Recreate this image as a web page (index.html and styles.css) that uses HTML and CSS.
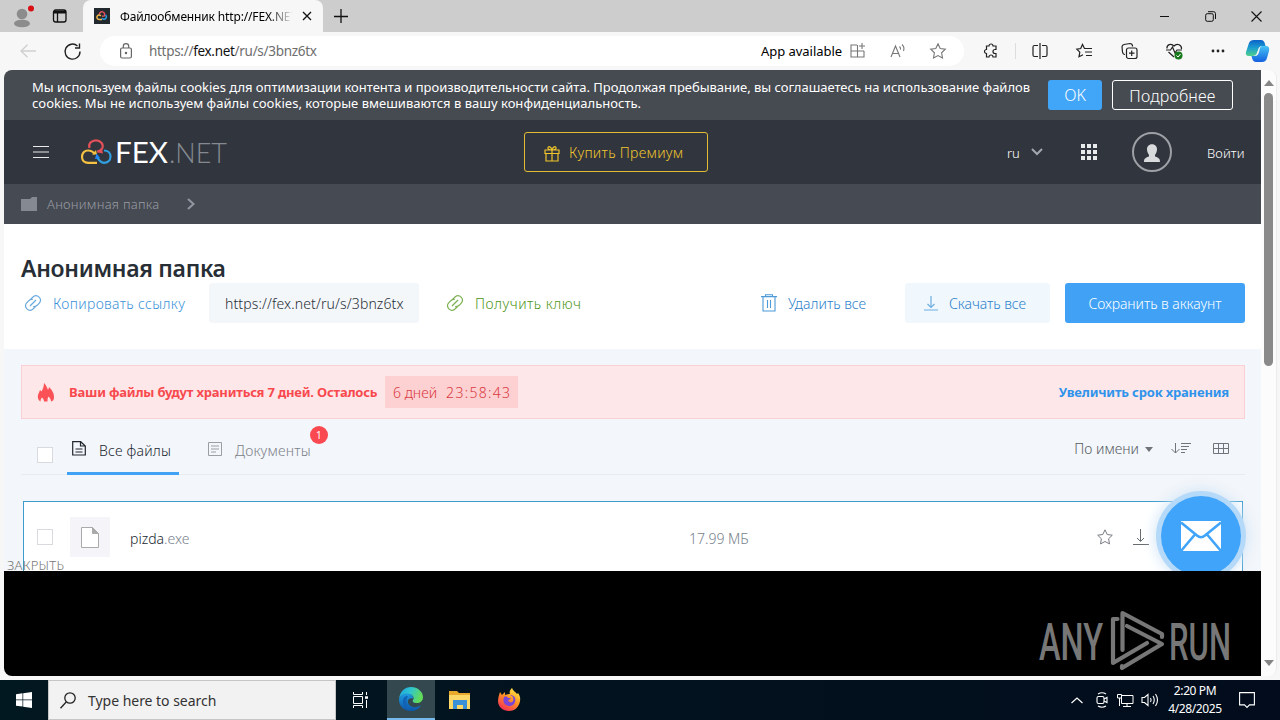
FILE: index.html
```
<!DOCTYPE html>
<html lang="ru">
<head>
    <meta charset="UTF-8">
    <title>Файлообменник http://FEX.NET</title>
    <link rel="stylesheet" href="styles.css">
</head>
<body>

<!-- browser tabs -->
<div class="tabstrip">
    <svg class="profile" width="24" height="28" viewBox="0 0 24 28">
        <circle cx="12" cy="12" r="5.3" fill="#8c8c8c"/>
        <ellipse cx="12" cy="21.5" rx="8" ry="3.8" fill="#8c8c8c"/>
        <circle cx="21" cy="6.5" r="3" fill="#d80f14"/>
    </svg>
    <svg class="tab-actions" width="16" height="16" viewBox="0 0 16 16" fill="none" stroke="#111" stroke-width="1.3">
        <rect x="1.5" y="2" width="12.5" height="12" rx="2.2"/>
        <path d="M2 3.5h12M2 4.8h12M5.5 5v9"/>
    </svg>
    <div class="tab">
        <svg width="16" height="16" viewBox="0 0 16 16" fill="none" stroke-width="1.5">
            <path d="M0 0h16v16H0z" fill="#22292f"/>
            <path d="M5.3 6.5a2.7 2.7 0 1 1 5 1.4L8 8.3" stroke="#e0525c"/>
            <path d="M8 11.5H5a2.2 2.2 0 1 1 1.8-3.6" stroke="#f0b94a"/>
            <path d="M11.5 7a2.4 2.4 0 1 1-3.5 3.2" stroke="#2b9fe0"/>
        </svg>
        <span class="tab-title">Файлообменник http://FEX.NET</span>
        <svg width="10" height="10" viewBox="0 0 10 10" stroke="#111" stroke-width="1.3"><path d="M1 1l8 8M9 1l-8 8"/></svg>
    </div>
    <svg class="new-tab" width="14" height="14" viewBox="0 0 14 14" stroke="#111" stroke-width="1.3"><path d="M7 0v14M0 7.5h14"/></svg>
    <div class="window-buttons">
        <svg width="11" height="11" viewBox="0 0 11 11" stroke="#111"><path d="M1 5.5h9"/></svg>
        <svg width="11" height="11" viewBox="0 0 11 11" fill="none" stroke="#111"><rect x=".7" y="2.7" width="7.6" height="7.6" rx="1.5"/><path d="M3 .7h5.5a2 2 0 0 1 2 2V8"/></svg>
        <svg width="11" height="11" viewBox="0 0 11 11" stroke="#111" stroke-width="1.1"><path d="M.5.5l10 10M10.5.5l-10 10"/></svg>
    </div>
</div>

<!-- address bar -->
<div class="toolbar">
    <svg class="back" width="16" height="14" viewBox="0 0 16 14" fill="none" stroke="#cfcfcf" stroke-width="1.3"><path d="M16 7H1M7.5.7L1 7l6.5 6.3"/></svg>
    <svg class="reload" width="17" height="17" viewBox="0 0 17 17" fill="none" stroke="#222" stroke-width="1.4"><path d="M16 8.5A7.5 7.5 0 1 1 13.5 3M15.5.5V5H11"/></svg>
    <div class="address">
        <svg width="12" height="16" viewBox="0 0 12 16" fill="none" stroke="#666" stroke-width="1.2"><rect x=".6" y="5" width="10.8" height="10" rx="1.5"/><path d="M3.3 5V3.3a2.7 2.7 0 0 1 5.4 0V5"/><circle cx="6" cy="10" r=".6" fill="#666"/></svg>
        <span class="url">https://<b>fex.net</b>/ru/s/3bnz6tx</span>
        <span class="app-available">App available</span>
        <svg width="16" height="16" viewBox="0 0 16 16" fill="none" stroke="#777" stroke-width="1.1"><path d="M7 2H1v12h13V8M7.5 2v12M1 8h13M12 0v6M9 3h6"/></svg>
        <svg class="read" width="16" height="16" viewBox="0 0 16 16" fill="none" stroke="#777" stroke-width="1.1"><path d="M1 14L5.5 3 10 14M2.5 10.500h6M9.500 3.500c1 1 1.300 2 1 3.200M12 1.500c2 2 2.300 4.500 1.500 6.500"/></svg>
        <svg class="fav" width="16" height="16" viewBox="0 0 16 16" fill="none" stroke="#777" stroke-width="1.1"><path d="M8 .8l2.200 4.700 5.100.7-3.700 3.600.9 5.100L8 12.500l-4.500 2.400.9-5.100L.7 6.200l5.100-.7z"/></svg>
    </div>
    <div class="tools">
        <svg width="16" height="16" viewBox="0 0 16 16" fill="none" stroke="#222" stroke-width="1.2"><path d="M3.500 3H6a2 2 0 0 1 4 0h3v3.500h-1a2 2 0 0 0 0 4h1V14h-3a2 2 0 0 0-4 0H3.500v-3.500a2 2 0 1 1 0-4z"/></svg>
        <i class="divider"></i>
        <svg width="16" height="16" viewBox="0 0 16 16" fill="none" stroke="#222" stroke-width="1.2"><path d="M6 2.500H2.500Q1 2.500 1 4v8q0 1.500 1.500 1.500H6M10 2.500h3.500Q15 2.500 15 4v8q0 1.500-1.500 1.500H10M8 0v16"/></svg>
        <svg width="17" height="16" viewBox="0 0 17 16" fill="none" stroke="#222" stroke-width="1.2"><path d="M10 5.500H8.500L6.500 1.500 4.700 5.500.8 6.200l3 3-.8 4.500 4-2M9.500 5.500H16M9 9h7M10 12.500h6"/></svg>
        <svg width="17" height="16" viewBox="0 0 17 16" fill="none" stroke="#222" stroke-width="1.2"><path d="M4 11.500Q2 11.500 1.500 9L1 4Q1 2 3 1.500l6-1q2 0 2.500 2v1"/><rect x="5.500" y="5" width="10.500" height="10.500" rx="2"/><path d="M10.700 7.500V13M8 10.200h5.500"/></svg>
        <svg width="17" height="17" viewBox="0 0 17 17" fill="none" stroke="#222" stroke-width="1.2"><path d="M8 14L2.500 9M1 5.500C.5 2 5-.5 8 3c3-3.500 8-1 7.500 3M0 7h4.500l2-3L9 10l2-3h5"/><circle cx="12.500" cy="12.500" r="4" fill="#187a1c" stroke="none"/><path d="M10.500 12.500l1.500 1.500 2.500-3" stroke="#fff" stroke-width="1"/></svg>
        <svg width="14" height="4" viewBox="0 0 14 4" fill="#222"><circle cx="2" cy="2" r="1.400"/><circle cx="7" cy="2" r="1.400"/><circle cx="12" cy="2" r="1.400"/></svg>
    </div>
    <svg class="copilot" width="24" height="24" viewBox="0 0 24 24">
        <defs>
            <linearGradient id="cpA" x1="0" y1="0" x2="0" y2="1"><stop offset="0" stop-color="#0b62c9"/><stop offset=".5" stop-color="#1d9fd0"/><stop offset="1" stop-color="#4fd18c"/></linearGradient>
            <linearGradient id="cpB" x1="0" y1="0" x2="0" y2="1"><stop offset="0" stop-color="#45c3f5"/><stop offset="1" stop-color="#1461e0"/></linearGradient>
        </defs>
        <path d="M8 1h7q3 0 4 4l.5 2H16q-3 0-4 4l-1.500 4q-1 2-4 2H3q-4 0-3-4L3 4q1-3 5-3z" fill="url(#cpA)"/>
        <path d="M16 7h4q4 0 3 5l-2 7q-1 4-5 4h-6q-3 0-4-4l-.500-2H9q3 0 4-4l1-4q.5-2 2-2z" fill="url(#cpB)"/>
    </svg>
</div>

<div class="window">
    <div class="page">
        <div class="cookies">
            <p>Мы используем файлы cookies для оптимизации контента и производительности сайта. Продолжая пребывание, вы соглашаетесь на использование файлов<br><span>cookies. Мы не используем файлы cookies, которые вмешиваются в вашу конфиденциальность.</span></p>
            <button class="btn-ok">OK</button>
            <button class="btn-more">Подробнее</button>
        </div>

        <div class="header">
            <svg class="burger" width="16" height="12" viewBox="0 0 16 12" stroke="#e8e9ea"><path d="M0 .5h16M0 6h16M0 11.500h16"/></svg>
            <svg class="logo" width="150" height="32" viewBox="0 0 150 32">
                <g fill="none" stroke-width="2.200">
                    <path d="M9.500 12C8 7.500 11.500 4.300 16 4.300s8 4 6.200 8c-1 2-3 3-5 3.300" stroke="#e2505a"/>
                    <path d="M17 26.800H8C4.500 26.800 2 24.300 2 20.800s2.500-6.300 6-6.300 5 1 6.800 3.500" stroke="#f5c243"/>
                    <path d="M24 14.500c4 0 6.500 2.800 6.500 6.100 0 4-3 6.200-6.500 6.200-3 0-5-2-7-6" stroke="#2fa0e2"/>
                </g>
                <path d="M12 18.500l5 0-1-4.500z" fill="#f5c243"/><path d="M15 23l1.500-5.500 3.500 4.500z" fill="#1e88ff"/><path d="M23 17.500l-5-1 4-3.500z" fill="#e2505a"/>
                <text x="35" y="26.500" textLength="53" lengthAdjust="spacingAndGlyphs" class="logo-main">FEX</text>
                <text x="89" y="26.500" textLength="58" lengthAdjust="spacingAndGlyphs" class="logo-net">.NET</text>
            </svg>
            <button class="premium">
                <svg width="16" height="16" viewBox="0 0 16 16" fill="none" stroke="#f0c52e" stroke-width="1.200"><path d="M1 4h14v3.500H1zM2 7.500h12V15H2zM8 4v11M8 4C5 4 3.500 3 4 1.500S7 .5 8 4c1-3.500 3.500-4 4-2.500S11 4 8 4z"/></svg>
                <span>Купить Премиум</span>
            </button>
            <span class="lang">ru</span>
            <svg class="lang-arrow" width="12" height="8" viewBox="0 0 12 8" fill="none" stroke="#a3a7ad" stroke-width="2"><path d="M1 1l5 5 5-5"/></svg>
            <svg class="apps" width="16" height="16" viewBox="0 0 16 16" fill="#e9eaeb"><path d="M0 0h4v4H0zM6 0h4v4H6zM12 0h4v4h-4zM0 6h4v4H0zM6 6h4v4H6zM12 6h4v4h-4zM0 12h4v4H0zM6 12h4v4H6zM12 12h4v4h-4z"/></svg>
            <svg class="avatar" width="40" height="40" viewBox="0 0 40 40"><circle cx="20" cy="20" r="19" fill="none" stroke="#9da0a5" stroke-width="2"/><path d="M15 17c0-6.500 10-6.500 10 0 0 3-1 4-2 6v1.500c3 1 5 1.500 5 5.500H12c0-4 2-4.500 5-5.500V23c-1-2-2-3-2-6z" fill="#d9dadc"/></svg>
            <span class="login">Войти</span>
        </div>

        <div class="crumbs">
            <svg width="16" height="14" viewBox="0 0 16 14" fill="#858a92"><path d="M0 2h9l2-2h5v14H0z"/></svg>
            <span>Анонимная папка</span>
            <svg width="8" height="12" viewBox="0 0 8 12" fill="none" stroke="#9296a0" stroke-width="2"><path d="M1 1l5.500 5L1 11"/></svg>
        </div>

        <div class="folder">
            <h1><span>Анонимная папка</span></h1>
            <div class="actions">
                <svg class="link-icon" width="18" height="18" viewBox="0 0 18 18" fill="none" stroke="#6aa9dc" stroke-width="1.200"><path d="M6.500 5.500l3-3a4.500 4.500 0 0 1 6.200 6.200l-2.500 2.600a4.500 4.500 0 0 1-4 1.200M11.500 12.500l-3 3a4.500 4.500 0 0 1-6.200-6.200l2.500-2.600a4.500 4.500 0 0 1 4-1.200M6 12l6-6"/></svg>
                <a class="copy">Копировать ссылку</a>
                <div class="share-url">https://fex.net/ru/s/3bnz6tx</div>
                <svg class="link-icon" width="18" height="18" viewBox="0 0 18 18" fill="none" stroke="#7bb050" stroke-width="1.200"><path d="M6.500 5.500l3-3a4.500 4.500 0 0 1 6.200 6.200l-2.500 2.600a4.500 4.500 0 0 1-4 1.200M11.500 12.500l-3 3a4.500 4.500 0 0 1-6.200-6.200l2.500-2.600a4.500 4.500 0 0 1 4-1.200M6 12l6-6"/></svg>
                <a class="key">Получить ключ</a>
                <svg class="trash" width="16" height="18" viewBox="0 0 16 18" fill="none" stroke="#4d9ad8" stroke-width="1.100"><path d="M0 2.600h16M4.500 2.500V.7h7v1.800M2 3v14h12V3M6.500 6v8M9.500 6v8"/></svg>
                <a class="delete">Удалить все</a>
                <button class="download-all">
                    <svg width="14" height="15" viewBox="0 0 14 15" fill="none" stroke="#6eaee0" stroke-width="1.200"><path d="M7 0v11M3.500 8L7 11.500 10.500 8M0 14h14"/></svg>
                    <span>Скачать все</span>
                </button>
                <button class="save"><span>Сохранить в аккаунт</span></button>
            </div>
        </div>

        <div class="content">
            <div class="alert">
                <svg width="18" height="19" viewBox="0 0 18 19" fill="#fb5257"><path d="M7 0c2 2 3 4 4 7 .5-1 1-2 1-3 4 4 5 7 5 10s-1 4-3 4.500c0-2-1-3.500-2.500-5-1 1.500-1 3-1 5H7c0-2-1-3-2-4-1 1-1.500 2-1.500 4C1 17 .5 15 1 12c.5-2 1.500-3 2-5 .5.500 1 1 1.500 1.500C6 6 7 3 7 0z"/></svg>
                <b class="alert-text">Ваши файлы будут храниться 7 дней. Осталось</b>
                <div class="timer"><span>6 дней</span><span class="clock">23:58:43</span></div>
                <a class="extend">Увеличить срок хранения</a>
            </div>

            <div class="filters">
                <i class="checkbox"></i>
                <div class="filter active">
                    <svg width="14" height="15" viewBox="0 0 14 15" fill="none" stroke="#20272e" stroke-width="1.200"><path d="M.7.7h8L13.300 5v9H.7zM8.500.7V5h4.800M3.500 8h7M3.500 11h7"/></svg>
                    <span>Все файлы</span>
                </div>
                <div class="filter docs">
                    <svg width="14" height="14" viewBox="0 0 14 14" fill="none" stroke="#9a9fa5"><path d="M.5.5h13v13H.5zM3 4h8M3 7h8M3 10h5"/></svg>
                    <span>Документы</span>
                    <em class="badge">1</em>
                </div>
                <div class="sorting">
                    <span>По имени</span>
                    <svg class="caret" width="8" height="5" viewBox="0 0 8 5" fill="#70757c"><path d="M0 0h8L4 5z"/></svg>
                    <svg class="sort" width="20" height="11" viewBox="0 0 20 11" fill="none" stroke="#70757c"><path d="M4.500 0v10M.5 6l4 4 4-4M10 .5h10M10 3.500h8M10 6.500h6M10 9.500h4"/></svg>
                    <svg class="grid-view" width="16" height="11" viewBox="0 0 16 11" fill="none" stroke="#70757c"><path d="M.5.5h15v10H.5zM.5 5.500h15M5.500.5v10M10.500.5v10"/></svg>
                </div>
            </div>

            <div class="file-row">
                <i class="checkbox"></i>
                <div class="thumb">
                    <svg width="18" height="21" viewBox="0 0 18 21" fill="#fff" stroke="#aaa"><path d="M.5.5h11l6 6v14H.5z"/><path d="M11.500.5v6h6z" fill="#aaa"/></svg>
                </div>
                <div class="file-name">pizda<span>.exe</span></div>
                <div class="file-size">17.99 МБ</div>
                <svg class="star" width="16" height="16" viewBox="0 0 16 16" fill="none" stroke="#777c82"><path d="M8 .8l2.200 4.700 5.100.7-3.700 3.600.9 5.100L8 12.500l-4.500 2.400.9-5.100L.7 6.200l5.100-.7z"/></svg>
                <svg class="download" width="16" height="16" viewBox="0 0 16 16" fill="none" stroke="#666b71"><path d="M7.500 0v12M4 9l3.500 3.500L11 9M0 15.500h16"/></svg>
            </div>
            <span class="close-label">ЗАКРЫТЬ</span>
            <div class="chat">
                <svg width="40" height="30" viewBox="0 0 40 30"><path d="M0 0h40v30H0z" fill="#fff"/><path d="M0 1.500l16 13q4 3.500 8 0l16-13M0 30l13.500-16M40 30L26.500 14" fill="none" stroke="#3fa4fa" stroke-width="2.600"/></svg>
            </div>
        </div>

        <div class="ad">
            <svg class="anyrun" width="194" height="64" viewBox="0 0 194 64">
                <text x="1" y="51" textLength="64" lengthAdjust="spacingAndGlyphs">ANY</text>
                <g fill="none" stroke="#777" stroke-width="4.200" stroke-linejoin="round" stroke-linecap="round">
                    <path d="M84.500 41V4L124 25v3M89 17l35 18-40 24v-2"/>
                    <path d="M79.500 10h-4.500v44l34-20"/>
                </g>
                <text x="131" y="51" textLength="62" lengthAdjust="spacingAndGlyphs">RUN</text>
            </svg>
        </div>
    </div>
    <div class="scrollbar">
        <svg width="10" height="6" viewBox="0 0 10 6" fill="#858585"><path d="M5 0l5 6H0z"/></svg>
        <div class="scroll-thumb"></div>
        <svg class="down" width="10" height="6" viewBox="0 0 10 6" fill="#858585"><path d="M0 0h10L5 6z"/></svg>
    </div>
</div>

<div class="taskbar">
    <div class="start"><svg width="16" height="16" viewBox="0 0 16 16" fill="#fff"><path d="M0 2.200L6.500 1.300v6.200H0zM7.200 1.200L16 0v7.500H7.200zM0 8.300h6.500v6.300L0 13.700zM7.200 8.300H16V16l-8.800-1.200z"/></svg></div>
    <div class="search">
        <svg width="16" height="17" viewBox="0 0 16 17" fill="none" stroke="#222" stroke-width="1.300"><circle cx="10" cy="6" r="5.200"/><path d="M6.200 10L.5 16.300"/></svg>
        <span>Type here to search</span>
    </div>
    <div class="task"><svg width="16" height="16" viewBox="0 0 16 16" fill="none" stroke="#fff"><path d="M.5 0v2.500h9V0M.5 16v-2.500h9V16M.5 4.500h9v7h-9zM13.500 0v3M13.500 8v8"/><path d="M12 4.300h3v2.500h-3z" fill="#fff" stroke="none"/></svg></div>
    <div class="task current">
        <svg width="24" height="24" viewBox="0 0 24 24">
            <defs>
                <linearGradient id="edA" x1="0" y1="0" x2="1" y2=".3"><stop offset="0" stop-color="#1b9fe0"/><stop offset=".5" stop-color="#2fc5cf"/><stop offset="1" stop-color="#63db5a"/></linearGradient>
                <linearGradient id="edB" x1="0" y1="0" x2="0" y2="1"><stop offset="0" stop-color="#1f9be0"/><stop offset="1" stop-color="#0c56a8"/></linearGradient>
            </defs>
            <path d="M0 12C1 4 6 0 12 0c7 0 12 5 12 10 0 4-3 6-6 6-4 0-5-1.500-4-3 2-3-1-6-5-6-5 0-8 2-9 5z" fill="url(#edA)"/>
            <path d="M0 12c1-3 4-5.500 8-5.500 4 0 6.500 2.500 6 5-5-1-6 3-4.500 5.500C12 21 18 21 22 18c-2 4-6 6-10 6C5 24-.5 19 0 12z" fill="url(#edB)"/>
            <path d="M9 9c-3 4-2 11 4 14.500-6-.5-9-4-9-8.500S6 9 9 9z" fill="#1263b5"/>
        </svg>
    </div>
    <div class="task"><svg width="22" height="20" viewBox="0 0 22 20"><path d="M0 1h8l2 2h11v15H0z" fill="#e8a92c"/><path d="M0 5h21v14H0z" fill="#fbd868"/><path d="M4 10h14v9h-4v-4H8v4H4z" fill="#3a91d8"/></svg></div>
    <div class="task">
        <svg width="24" height="24" viewBox="0 0 24 24">
            <defs><linearGradient id="ff" x1=".8" y1="0" x2=".2" y2="1"><stop offset="0" stop-color="#fff04a"/><stop offset=".45" stop-color="#ff9423"/><stop offset="1" stop-color="#f3265c"/></linearGradient></defs>
            <path d="M3 4l2 3 3-3v3c2-1 4-1 5-1-1-2 0-4 2-6 1 3 4 4 5 6l1-1c2 3 2.500 5 2 8-1 6-5 10-11 10S1 19 1 13c0-3 1-6 2-9z" fill="url(#ff)"/>
            <path d="M7 9c2-1 4 0 4 1h3c-1 1-2 2-3 2 1 3 4 3 5 1 1-3 0-5-3-6 5 0 6 4 5 7-1 4-6 5-9 3-3-2-3-5-2-8z" fill="#7946d8"/>
        </svg>
    </div>
    <div class="tray">
        <svg width="12" height="7" viewBox="0 0 12 7" fill="none" stroke="#fff" stroke-width="1.200"><path d="M.5 6L6 1l5.500 5"/></svg>
        <svg class="camera" width="12" height="16" viewBox="0 0 12 16" fill="none" stroke="#fff" stroke-width="1.100"><rect x="1" y="4.500" width="7" height="7" rx="1.500"/><path d="M8 7l3-1.500v5L8 9M2 2q4-2.500 8 0M2 14q4 2.500 8 0"/></svg>
        <svg width="17" height="14" viewBox="0 0 17 14" fill="none" stroke="#fff"><path d="M5 2.500h11v8H4.500V5M.5 1.500h4V5h-4zM2.500 5v8M10 10.500v3M6 13.500h8"/></svg>
        <svg class="sound" width="18" height="14" viewBox="0 0 18 14" fill="none" stroke="#fff" stroke-width="1.100"><path d="M1 4.500h2.500L7 1.500v11L3.500 9.500H1zM9.500 5q1.300 2 0 4M12 3q2.500 4 0 8M14.500 1q4 6 0 12"/></svg>
    </div>
    <div class="datetime"><span>2:20 PM</span><span>4/28/2025</span></div>
    <svg class="notify" width="16" height="17" viewBox="0 0 16 17" fill="none" stroke="#fff" stroke-width="1.100"><path d="M.6.6h14.800v12.300h-4.900L8 15.500l-2.500-2.600H.6z"/></svg>
</div>

</body>
</html>
```

FILE: styles.css
```
* {
    box-sizing: border-box;
}
body {
    margin: 0;
    width: 1280px;
    height: 720px;
    overflow: hidden;
    background: #f7f7f7;
    font-family: "Noto Sans", "Open Sans", sans-serif;
    font-size: 14px;
    display: flex;
    flex-direction: column;
}
svg {
    display: block;
    flex: none;
    overflow: visible;
}
button {
    font: inherit;
    border: none;
    padding: 0;
}
span, a, b {
    white-space: nowrap;
}

/* tabs */
.tabstrip {
    height: 32px;
    background: #cdcdcd;
    display: flex;
    align-items: center;
    flex: none;
}
.profile {
    margin-left: 10px;
}
.tab-actions {
    margin-left: 18px;
}
.tab {
    width: 240px;
    height: 32px;
    margin-left: 15px;
    padding: 0 11px;
    background: #f7f7f7;
    border-radius: 8px 8px 0 0;
    display: flex;
    align-items: center;
}
.tab-title {
    width: 173px;
    margin: 0 9px 0 10px;
    font-size: 12px;
    letter-spacing: -0.15px;
    overflow: hidden;
    -webkit-mask-image: linear-gradient(90deg, #000 86%, transparent);
}
.new-tab {
    margin-left: 11px;
}
.window-buttons {
    margin-left: auto;
    margin-right: 18px;
    display: flex;
    gap: 35px;
}

/* toolbar */
.toolbar {
    height: 38px;
    flex: none;
    display: flex;
    align-items: center;
}
.back {
    margin-left: 20px;
}
.reload {
    margin-left: 28px;
}
.address {
    width: 864px;
    height: 30px;
    margin-left: 19px;
    padding: 0 18px 0 20px;
    border-radius: 15px;
    background: #fff;
    display: flex;
    align-items: center;
}
.url {
    margin-left: 17px;
    color: #6e6e6e;
    font-size: 13.500px;
    letter-spacing: -0.3px;
}
.url b {
    font-weight: 400;
    color: #111;
}
.app-available {
    margin-left: auto;
    margin-right: 8px;
    font-size: 13px;
    letter-spacing: -0.05px;
}
.read {
    margin-left: 24px;
}
.fav {
    margin-left: 24px;
}
.tools {
    display: flex;
    align-items: center;
    margin-left: 19px;
    gap: 28px;
}
.divider {
    width: 1px;
    height: 16px;
    margin: 0 -12px;
    background: #ddd;
}
.copilot {
    margin-left: auto;
    margin-right: 10px;
}

/* page */
.window {
    height: 610px;
    flex: none;
    padding: 0 3px 4px 4px;
    display: flex;
}
.page {
    width: 1257px;
    height: 606px;
    border-radius: 8px 0 0 8px;
    overflow: hidden;
    background: #fff;
    font-weight: 300;
}
.scrollbar {
    width: 16px;
    background: #fcfcfc;
    border-right: 1px solid #ececec;
    border-radius: 0 8px 8px 0;
    display: flex;
    flex-direction: column;
    align-items: center;
    padding: 10px 0;
}
.scroll-thumb {
    width: 9px;
    height: 273px;
    margin-top: 7px;
    border-radius: 5px;
    background: #8a8a8a;
}
.down {
    margin-top: auto;
}
.cookies {
    height: 50px;
    background: #464a51;
    color: #fff;
    padding: 10px 28px;
    display: flex;
}
.cookies p {
    width: 1016px;
    flex: none;
    margin: -1px 0 0;
    font-size: 13px;
    line-height: 16px;
    font-weight: 400;
    letter-spacing: -0.02px;
    white-space: nowrap;
}
.cookies p span {
    letter-spacing: 0.02px;
}
.btn-ok, .btn-more {
    height: 30px;
    border-radius: 3px;
    color: #fff;
    font-size: 16px;
    line-height: 31px;
    font-weight: 300;
}
.btn-ok {
    width: 54px;
    margin-right: 10px;
    background: #41a5f8;
}
.btn-more {
    width: 121px;
    border: 1px solid #fff;
    background: none;
    letter-spacing: 0.2px;
}
.header {
    height: 64px;
    background: #31353d;
    color: #fff;
    display: flex;
    align-items: center;
}
.burger {
    margin-left: 29px;
}
.logo {
    margin-left: 31px;
}
.logo text {
    font-family: Lato, sans-serif;
    font-size: 28px;
    font-weight: 400;
    fill: #fff;
}
.logo .logo-net {
    font-weight: 300;
    fill: #858a91;
}
.premium {
    width: 184px;
    height: 40px;
    margin-left: 294px;
    border: 1px solid #e3bc35;
    border-radius: 3px;
    background: none;
    color: #f0c52e;
    display: flex;
    align-items: center;
    padding-left: 19px;
    gap: 9px;
    letter-spacing: 0.3px;
}
.premium svg {
    margin-top: 3px;
}
.lang {
    margin-left: 299px;
    margin-top: 2px;
    width: 13px;
    font-size: 13px;
}
.lang-arrow {
    margin-left: 11px;
}
.apps {
    margin-left: 38px;
}
.avatar {
    margin-left: 35px;
}
.login {
    margin-left: 35px;
    margin-top: 2px;
    font-size: 13px;
    letter-spacing: 0.1px;
}
.crumbs {
    height: 40px;
    background: #464a52;
    color: #989ca4;
    display: flex;
    align-items: center;
    padding-left: 17px;
    font-size: 13px;
    letter-spacing: 0.25px;
}
.crumbs span {
    width: 140px;
    margin-left: 10px;
}

/* folder */
.folder {
    height: 125px;
    padding: 31px 16px 0 17px;
}
h1 {
    margin: 0;
    height: 28px;
    font-size: 23px;
    line-height: 27px;
    font-weight: 600;
    letter-spacing: -0.3px;
    color: #272e35;
}
.actions {
    height: 40px;
    display: flex;
    align-items: center;
    letter-spacing: 0.35px;
}
.link-icon {
    margin-left: 3px;
}
.copy {
    width: 145px;
    margin-left: 11px;
    color: #3c92d8;
}
.share-url {
    width: 210px;
    height: 40px;
    margin-left: 11px;
    padding-left: 16px;
    margin-right: 24px;
    border-radius: 3px;
    background: #f4f7fa;
    color: #272e35;
    line-height: 41px;
    letter-spacing: 0.13px;
}
.key {
    margin-left: 11px;
    width: 286px;
    color: #4f9618;
    letter-spacing: 0.5px;
}
.delete {
    width: 117px;
    margin-left: 11px;
    color: #2b82ca;
    letter-spacing: 0;
}
.download-all {
    width: 145px;
    height: 40px;
    border-radius: 3px;
    background: #f0f7fd;
    color: #2b82ca;
    display: flex;
    align-items: center;
    padding-left: 19px;
    gap: 11px;
    letter-spacing: -0.05px;
}
.save {
    width: 180px;
    height: 40px;
    margin-left: 15px;
    border-radius: 3px;
    background: #41a2f5;
    color: #fff;
    letter-spacing: -0.05px;
}

/* list */
.content {
    height: 222px;
    position: relative;
    overflow: hidden;
    background: #f3f6fa;
    padding: 16px 16px 0 17px;
}
.alert {
    height: 54px;
    border: 1px solid #fad0d2;
    background: #fde7e8;
    display: flex;
    align-items: center;
    padding: 0 15px;
}
.alert-text {
    width: 309px;
    margin-left: 14px;
    font-size: 13px;
    font-weight: 700;
    letter-spacing: -0.19px;
    color: #f8494f;
}
.timer {
    height: 32px;
    width: 133px;
    margin-left: 7px;
    padding-left: 8px;
    background: #fdd0d1;
    color: #d9393f;
    line-height: 33px;
    display: flex;
}
.clock {
    margin-left: 9px;
    letter-spacing: 1.3px;
}
.extend {
    margin-left: auto;
    font-size: 13px;
    font-weight: 700;
    letter-spacing: -0.18px;
    color: #2f93ec;
}
.filters {
    height: 56px;
    border-bottom: 1px solid #e9ecef;
    padding-left: 16px;
    display: flex;
}
.checkbox {
    width: 16px;
    height: 16px;
    border: 1px solid #d8dadd;
    background: #fff;
    flex: none;
}
.filters .checkbox {
    margin-top: 28px;
}
.filter {
    height: 56px;
    display: flex;
    align-items: center;
    gap: 13px;
    padding: 0 4px 0 5px;
    position: relative;
    color: #7c8188;
    letter-spacing: 0.2px;
}
.filter svg {
    margin-top: 6px;
}
.filter span {
    margin-top: 9px;
}
.active {
    width: 112px;
    margin-left: 14px;
    border-bottom: 3px solid #41a2f5;
    color: #20272e;
}
.docs {
    margin-left: 24px;
    height: 53px;
}
.badge {
    position: absolute;
    top: 7px;
    left: 107px;
    width: 18px;
    height: 18px;
    border-radius: 9px;
    background: #fa4950;
    color: #fff;
    font-size: 10px;
    font-style: normal;
    font-weight: 400;
    line-height: 18px;
    text-align: center;
}
.sorting {
    margin-left: auto;
    margin-right: 16px;
    height: 58px;
    display: flex;
    align-items: center;
    color: #555b62;
}
.caret {
    margin: 3px 0 0 6px;
}
.sort {
    margin-left: 18px;
}
.grid-view {
    margin-left: 22px;
}
.file-row {
    width: 1220px;
    height: 78px;
    margin: 26px 0 0 2px;
    border: 1px solid #3d9ccb;
    background: #fff;
    display: flex;
    align-items: center;
    padding: 0 93px 6px 13px;
}
.thumb {
    width: 40px;
    height: 40px;
    margin-left: 17px;
    background: #f5f5f9;
    display: flex;
    align-items: center;
    justify-content: center;
}
.file-name {
    width: 559px;
    margin-left: 20px;
    margin-top: 2px;
    color: #20272e;
}
.file-name span, .file-size {
    color: #77828d;
}
.file-size {
    margin-top: 2px;
}
.star {
    margin-left: auto;
}
.download {
    margin-left: 20px;
}
.close-label {
    position: absolute;
    left: 3px;
    top: 208px;
    font-size: 13px;
    line-height: 16px;
    letter-spacing: 0.25px;
    color: #777;
}
.chat {
    position: absolute;
    left: 1157px;
    top: 147px;
    width: 80px;
    height: 80px;
    border-radius: 50%;
    background: #3fa4fa;
    box-shadow: 0 0 0 5px #b5d9f8, 0 0 14px 6px #cfe4f7;
    display: flex;
    align-items: center;
    justify-content: center;
}
.ad {
    height: 105px;
    background: #000;
    display: flex;
    justify-content: flex-end;
    padding: 38px 29px 0 0;
}
.anyrun text {
    font-family: Roboto, sans-serif;
    font-size: 52px;
    font-weight: 500;
    fill: #777;
}

/* taskbar */
.taskbar {
    height: 40px;
    flex: none;
    background: linear-gradient(90deg, #021820, #020c1c);
    display: flex;
    align-items: center;
    color: #fff;
}
.start {
    width: 48px;
    display: flex;
    justify-content: center;
}
.search {
    width: 288px;
    height: 40px;
    border: 1px solid #c6c6c6;
    background: #f2f2f2;
    color: #333;
    display: flex;
    align-items: center;
    padding-left: 11px;
    gap: 12px;
    font-size: 14px;
    letter-spacing: -0.03px;
}
.task {
    width: 49px;
    height: 40px;
    display: flex;
    align-items: center;
    justify-content: center;
}
.current {
    margin-left: 2px;
    width: 48px;
    background: #344850;
    border-bottom: 2px solid #76b9ed;
}
.tray {
    margin-left: auto;
    display: flex;
    align-items: center;
    gap: 9px;
}
.camera {
    margin-left: 4px;
}
.sound {
    margin-left: -2px;
}
.datetime {
    width: 72px;
    font-size: 12px;
    line-height: 18px;
    display: flex;
    flex-direction: column;
    align-items: center;
    letter-spacing: -0.4px;
}
.notify {
    margin: 0 25px 0 8px;
}
```
